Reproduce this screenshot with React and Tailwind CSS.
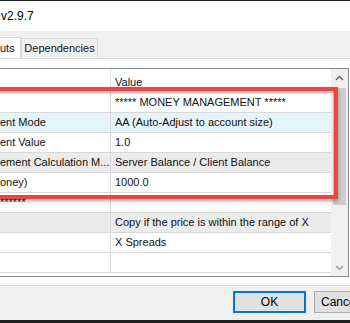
import React from 'react';

const rows = [
  { name: '', value: '***** MONEY MANAGEMENT *****', bg: 'bg-white' },
  { name: 'ent Mode', value: 'AA (Auto-Adjust to account size)', bg: 'bg-[#e5f3fb]' },
  { name: 'ent Value', value: '1.0', bg: 'bg-white' },
  { name: 'ement Calculation M...', value: 'Server Balance / Client Balance', bg: 'bg-[#ebebeb]' },
  { name: 'oney)', value: '1000.0', bg: 'bg-white' },
  { name: '******', value: '', bg: 'bg-white' },
  { name: '', value: 'Copy if the price is within the range of X', bg: 'bg-[#ebebeb]' },
  { name: '', value: 'X Spreads', bg: 'bg-white' },
  { name: '', value: '', bg: 'bg-white' },
];

const ChevronUp = () => (
  <svg width="9" height="6" viewBox="0 0 9 6" fill="none">
    <path d="M1 5L4.5 1.5L8 5" stroke="#606060" strokeWidth="1.5" />
  </svg>
);

const ChevronDown = () => (
  <svg width="9" height="6" viewBox="0 0 9 6" fill="none">
    <path d="M1 1L4.5 4.5L8 1" stroke="#a0a0a0" strokeWidth="1.5" />
  </svg>
);

export default function App() {
  return (
    <div
      className="relative w-[350px] h-[323px] overflow-hidden bg-[#f0f0f0] text-[11px] text-[#111]"
      style={{ fontFamily: '"Liberation Sans", Arial, sans-serif' }}
    >
      {/* Taskbar strip */}
      <div className="h-px bg-[#1e1e1e]" />

      {/* Title bar */}
      <div className="h-[30px] bg-white flex items-center pl-px text-[12px] text-black">v2.9.7</div>

      {/* Tabs */}
      <div className="h-[27px] flex items-end">
        <div className="h-[21px] w-[21px] shrink-0 bg-white border-t border-r border-[#d9d9d9] flex items-center">
          <span className="whitespace-nowrap">uts</span>
        </div>
        <div className="h-[19px] mb-px w-[77px] shrink-0 bg-[#f0f0f0] border border-b-0 border-[#d9d9d9] flex items-center justify-center">
          Dependencies
        </div>
      </div>

      {/* Tab page */}
      <div className="h-[228px] w-[350px] bg-white border-t border-b border-[#d9d9d9] pt-[9px] pb-[8px]">
        <div className="h-[209px] w-[349px] border border-l-0 border-[#828790] flex">
          <div className="flex-1 flex flex-col">
            {/* Header */}
            <div className="h-[24px] shrink-0 flex border-b border-[#e5e5e5]">
              <div className="w-[111px] border-r border-[#e5e5e5]" />
              <div className="flex-1 flex items-center pl-[4px] pt-[3px]">Value</div>
            </div>
            {rows.map((r, i) => (
              <div key={i} className={`h-[20px] shrink-0 flex border-b border-[#d8d8d8] ${r.bg}`}>
                <div className="w-[111px] border-r border-[#d8d8d8] flex items-center whitespace-nowrap overflow-hidden">
                  <span>{r.name}</span>
                </div>
                <div className="flex-1 flex items-center pl-[4px] whitespace-nowrap overflow-hidden">{r.value}</div>
              </div>
            ))}
          </div>

          {/* Scrollbar */}
          <div className="w-[17px] bg-[#f0f0f0] flex flex-col items-center">
            <div className="h-[17px] w-full flex items-center justify-center">
              <ChevronUp />
            </div>
            <div className="w-[13px] h-[117px] mt-[2px] bg-[#cdcdcd]" />
            <div className="flex-1" />
            <div className="h-[17px] w-full flex items-center justify-center">
              <ChevronDown />
            </div>
          </div>
        </div>
      </div>

      {/* Buttons */}
      <div className="h-[34px] flex items-start pt-[5px] pl-[233px] gap-[8px]">
        <button className="h-[22px] w-[73px] shrink-0 bg-[#e1e1e1] border-2 border-[#0078d7] text-[12px] text-black flex items-center justify-center">
          OK
        </button>
        <button className="h-[22px] w-[73px] shrink-0 bg-[#e1e1e1] border border-[#adadad] text-[12px] text-black flex items-center justify-start pl-[6px]">
          Cancel
        </button>
      </div>

      {/* Bottom edge */}
      <div className="h-[3px] bg-[#1e1e1e]" />

      {/* Red highlight box */}
      <div className="absolute left-[-10px] top-[87px] w-[348px] h-[112px] border-[4px] border-[#ef4444] shadow-[0_2px_4px_rgba(0,0,0,0.35),inset_0_2px_3px_rgba(0,0,0,0.25)] pointer-events-none" />
    </div>
  );
}
